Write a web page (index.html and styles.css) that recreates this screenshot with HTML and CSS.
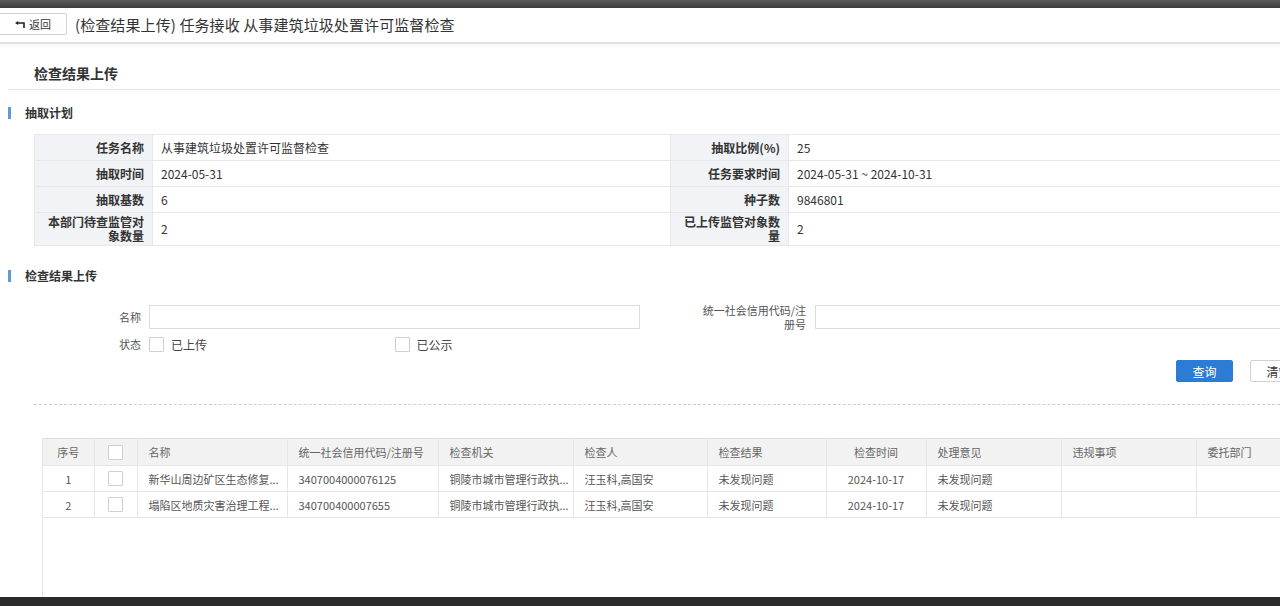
FILE: index.html
```html
<!DOCTYPE html>
<html lang="zh-CN">
<head>
    <meta charset="UTF-8">
    <meta name="viewport" content="width=device-width, initial-scale=1.0">
    <title>检查结果上传</title>
    <link rel="stylesheet" href="styles.css">
</head>
<body>

    <div class="topbar"></div>

    <!-- 顶部标题 -->
    <div class="header">
        <button class="back-btn">
            <svg width="10" height="7" viewBox="0 0 10 7">
                <path d="M0 2 L3.2 0 L3.2 4 Z" fill="#222"/>
                <path d="M3 2 H9 V7" fill="none" stroke="#222" stroke-width="1.6"/>
            </svg>
            返回
        </button>
        <span class="title">(检查结果上传) 任务接收 从事建筑垃圾处置许可监督检查</span>
    </div>

    <div class="main">
        <div class="page-title">检查结果上传</div>

        <!-- 抽取计划 -->
        <div class="section-head">抽取计划</div>
        <table class="info">
            <colgroup>
                <col style="width:118px"><col style="width:518px"><col style="width:118px"><col>
            </colgroup>
            <tr>
                <td class="label">任务名称</td><td>从事建筑垃圾处置许可监督检查</td>
                <td class="label">抽取比例(%)</td><td>25</td>
            </tr>
            <tr>
                <td class="label">抽取时间</td><td>2024-05-31</td>
                <td class="label">任务要求时间</td><td>2024-05-31 ~ 2024-10-31</td>
            </tr>
            <tr>
                <td class="label">抽取基数</td><td>6</td>
                <td class="label">种子数</td><td>9846801</td>
            </tr>
            <tr class="tall">
                <td class="label">本部门待查监管对象数量</td><td>2</td>
                <td class="label">已上传监管对象数量</td><td>2</td>
            </tr>
        </table>

        <!-- 检查结果上传 -->
        <div class="section-head second">检查结果上传</div>
        <div class="search">
            <label class="field-label">名称</label>
            <input class="field-input" type="text">
            <label class="field-label wide">统一社会信用代码/注册号</label>
            <input class="field-input" type="text">

            <label class="field-label">状态</label>
            <div class="checks">
                <div class="check"><span class="box"></span>已上传</div>
                <div class="check"><span class="box"></span>已公示</div>
            </div>
        </div>

        <div class="actions">
            <button class="btn primary">查询</button>
            <button class="btn">清空</button>
        </div>

        <div class="divider"></div>

        <div class="list-wrap">
            <table class="list">
                <colgroup>
                    <col style="width:51px"><col style="width:43px"><col style="width:150px">
                    <col style="width:151px"><col style="width:135px"><col style="width:134px">
                    <col style="width:119px"><col style="width:100px"><col style="width:135px">
                    <col style="width:135px"><col style="width:135px">
                </colgroup>
                <tr>
                    <th class="center">序号</th>
                    <th><span class="box"></span></th>
                    <th>名称</th>
                    <th>统一社会信用代码/注册号</th>
                    <th>检查机关</th>
                    <th>检查人</th>
                    <th>检查结果</th>
                    <th class="center">检查时间</th>
                    <th>处理意见</th>
                    <th>违规事项</th>
                    <th>委托部门</th>
                </tr>
                <tr>
                    <td class="center">1</td>
                    <td><span class="box"></span></td>
                    <td>新华山周边矿区生态修复...</td>
                    <td>3407004000076125</td>
                    <td>铜陵市城市管理行政执...</td>
                    <td>汪玉科,高国安</td>
                    <td>未发现问题</td>
                    <td class="center">2024-10-17</td>
                    <td>未发现问题</td>
                    <td></td>
                    <td></td>
                </tr>
                <tr>
                    <td class="center">2</td>
                    <td><span class="box"></span></td>
                    <td>塌陷区地质灾害治理工程...</td>
                    <td>340700400007655</td>
                    <td>铜陵市城市管理行政执...</td>
                    <td>汪玉科,高国安</td>
                    <td>未发现问题</td>
                    <td class="center">2024-10-17</td>
                    <td>未发现问题</td>
                    <td></td>
                    <td></td>
                </tr>
            </table>
        </div>
    </div>

    <div class="bottombar"></div>

</body>
</html>
```

FILE: styles.css
```css
* {
    margin: 0;
    padding: 0;
    box-sizing: border-box;
}

body {
    font-family: "Noto Sans CJK SC", "Liberation Sans", sans-serif;
    color: #333;
    background: #fff;
    width: 1280px;
    height: 100vh;
    overflow: hidden;
    display: flex;
    flex-direction: column;
}

.topbar {
    height: 8px;
    flex-shrink: 0;
    background: linear-gradient(#5c5c5c, #3d3d3d);
}

.bottombar {
    height: 9px;
    flex-shrink: 0;
    background: #2b2b2b;
}

/* 顶部标题 */
.header {
    height: 36px;
    flex-shrink: 0;
    display: flex;
    align-items: center;
    padding-bottom: 2px;
    border-bottom: 2px solid #e2e2e2;
    box-shadow: 0 3px 4px rgba(0, 0, 0, 0.03);
}

.back-btn {
    margin-left: -1px;
    width: 68px;
    height: 22px;
    border: 1px solid #d4d4d4;
    border-radius: 2px;
    background: #fff;
    display: flex;
    align-items: center;
    justify-content: center;
    gap: 4px;
    font-family: inherit;
    font-size: 11px;
    color: #333;
}

.title {
    margin-left: 8px;
    font-size: 15px;
    color: #333;
    letter-spacing: 0.1px;
}

.main {
    flex: 1;
    min-height: 0;
    width: 1340px;
    display: flex;
    flex-direction: column;
}

.page-title {
    margin-left: 8px;
    padding: 20px 0 7px 26px;
    font-size: 14px;
    font-weight: bold;
    line-height: 18px;
    border-bottom: 1px solid #e6e6e6;
}

.section-head {
    margin: 17px 0 0 8px;
    height: 12px;
    line-height: 12px;
    padding-left: 14px;
    border-left: 3px solid #5d9cd6;
    font-size: 12px;
    font-weight: bold;
}

.section-head.second {
    margin-top: 24px;
}

/* 抽取计划表 */
.info {
    margin: 15px 0 0 34px;
    width: 1306px;
    border-collapse: collapse;
    table-layout: fixed;
    font-size: 12px;
}

.info td {
    height: 26px;
    padding: 0 9px 0 8px;
    border: 1px solid #e8e8e8;
    color: #333;
}

.info .label {
    background: #f1f3f6;
    text-align: right;
    font-weight: bold;
    padding: 0 8px;
}

.info .tall td {
    height: 33px;
    line-height: 14px;
}

/* 查询条件 */
.search {
    margin-top: 23px;
    display: grid;
    grid-template-columns: 149px 491px 175px 500px;
    grid-template-rows: 24px 16px;
    row-gap: 7px;
    align-items: center;
    font-size: 11px;
    color: #555;
}

.field-label {
    text-align: right;
    padding-right: 8px;
}

.field-label.wide {
    padding: 0 9px 0 59px;
    line-height: 14px;
}

.field-input {
    height: 24px;
    border: 1px solid #dcdcdc;
    background: #fff;
}

.checks {
    display: flex;
}

.check {
    width: 50%;
    display: flex;
    align-items: center;
    gap: 7px;
    font-size: 12px;
    color: #444;
}

.box {
    display: block;
    width: 15px;
    height: 15px;
    border: 1px solid #cfcfcf;
    border-radius: 1px;
    background: #fff;
}

.actions {
    margin-top: 8px;
    display: flex;
    justify-content: flex-end;
    gap: 17px;
    padding-right: 33px;
}

.btn {
    width: 57px;
    height: 22px;
    border: 1px solid #d0d0d0;
    border-radius: 2px;
    background: #fff;
    font-family: inherit;
    font-size: 12px;
    color: #333;
}

.btn.primary {
    background: #2c7cd6;
    border-color: #2c7cd6;
    color: #fff;
}

.divider {
    margin: 22px 0 0 34px;
    border-top: 1px dashed #cfcfcf;
}

/* 结果列表 */
.list-wrap {
    flex: 1;
    margin: 33px 0 0 42px;
    border-left: 1px solid #e6e6e6;
}

.list {
    width: 1288px;
    border-collapse: collapse;
    table-layout: fixed;
    font-size: 11px;
}

.list th,
.list td {
    height: 27px;
    padding: 0 11px;
    text-align: left;
    white-space: nowrap;
    overflow: hidden;
    border: 1px solid #e6e6e6;
    border-left: none;
}

.list th {
    background: #f2f2f2;
    font-weight: normal;
    color: #666;
    border-top-color: #dedede;
}

.list td {
    height: 26px;
    color: #555;
}

.list .center {
    text-align: center;
}

.list .box {
    margin: 0 auto;
}
```
